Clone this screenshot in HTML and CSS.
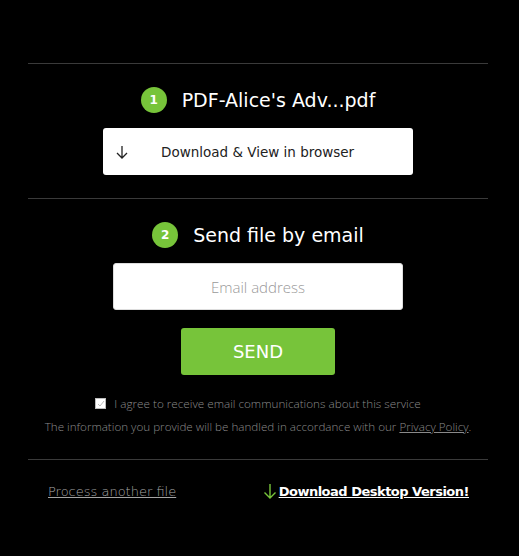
FILE: index.html
```html
<!DOCTYPE html>
<html lang="en">

<head>
    <meta charset="UTF-8">
    <meta name="viewport" content="width=device-width, initial-scale=1.0">
    <title>Send file</title>
    <link rel="stylesheet" href="styles.css">
</head>

<body>
    <div class="panel">
        <div class="step">
            <h2 class="step-title"><span class="badge">1</span>PDF-Alice's Adv...pdf</h2>
            <button class="view-btn">
                <svg class="arrow" width="12" height="14" viewBox="0 0 12 14">
                    <path d="M6 1v12M1 8l5 5 5-5" fill="none" stroke="#222" stroke-width="1.3"/>
                </svg>
                <span>Download &amp; View in browser</span>
            </button>
        </div>

        <div class="step">
            <h2 class="step-title"><span class="badge">2</span>Send file by email</h2>
            <input class="email" type="text" placeholder="Email address">
            <button class="send-btn">SEND</button>
            <label class="agree">
                <span class="check">
                    <svg width="9" height="9" viewBox="0 0 9 9">
                        <path d="M2 5l2 2 4-5" fill="none" stroke="#bbb" stroke-width="1"/>
                    </svg>
                </span>I agree to receive email communications about this service</label>
            <p class="info">The information you provide will be handled in accordance with our <a href="#">Privacy Policy</a>.</p>
        </div>

        <div class="footer">
            <a class="another" href="#">Process another file</a>
            <a class="desktop" href="#">
                <svg width="14" height="16" viewBox="0 0 14 16">
                    <path d="M7 1v14M1.5 9.5L7 15l5.5-5.5" fill="none" stroke="#77c43a" stroke-width="1.4"/>
                </svg>
                <span>Download Desktop Version!</span>
            </a>
        </div>
    </div>
</body>

</html>
```

FILE: styles.css
```css
*,
*::before,
*::after {
    box-sizing: border-box;
}

body {
    margin: 0;
    background: #000;
    font-family: "DejaVu Sans", sans-serif;
    color: #fff;
}

.panel {
    width: 460px;
    margin: 0 0 0 28px;
    padding-top: 63px;
}

.step {
    border-top: 1px solid #3a3a3a;
    display: flex;
    flex-direction: column;
    align-items: center;
}

.step-title {
    display: flex;
    align-items: center;
    margin: 23px 0 15px;
    font-size: 19px;
    font-weight: normal;
    height: 26px;
}

.badge {
    width: 26px;
    height: 26px;
    border-radius: 50%;
    background: #77c43a;
    color: #fff;
    font-size: 12px;
    font-weight: bold;
    display: flex;
    align-items: center;
    justify-content: center;
    margin-right: 15px;
}

.view-btn {
    width: 310px;
    height: 47px;
    margin-bottom: 23px;
    background: #fff;
    border: none;
    border-radius: 3px;
    display: flex;
    align-items: center;
    padding: 0 0 0 13px;
    font-family: "DejaVu Sans", sans-serif;
    font-size: 13.5px;
    color: #222;
    cursor: pointer;
}

.view-btn .arrow {
    margin-right: 33px;
}

.email {
    width: 290px;
    height: 47px;
    border: 1px solid #ddd;
    border-radius: 3px;
    text-align: center;
    font-family: "Open Sans", sans-serif;
    font-weight: 300;
    font-size: 15px;
    outline: none;
}

.email::placeholder {
    color: #999;
}

.send-btn {
    margin-top: 18px;
    width: 154px;
    height: 47px;
    border: none;
    border-radius: 3px;
    background: #77c43a;
    color: #fff;
    font-family: "DejaVu Sans", sans-serif;
    font-size: 18px;
    cursor: pointer;
}

.agree {
    margin-top: 20px;
    display: flex;
    align-items: center;
    font-family: "Open Sans", sans-serif;
    font-weight: 300;
    font-size: 11.7px;
    color: #8a8a8a;
}

.check {
    width: 11px;
    height: 11px;
    background: #fff;
    border: 1px solid #bbb;
    margin-right: 8px;
    display: flex;
    align-items: center;
    justify-content: center;
}

.info {
    margin: 8px 0 25px;
    font-family: "Open Sans", sans-serif;
    font-weight: 300;
    font-size: 11.65px;
    color: #8a8a8a;
}

.info a {
    color: #8a8a8a;
}

.footer {
    border-top: 1px solid #3a3a3a;
    display: flex;
    justify-content: space-between;
    align-items: center;
    padding: 23px 19px 0 20px;
}

.another {
    color: #a5a5a5;
    font-size: 13px;
    font-weight: 300;
}

.desktop {
    display: flex;
    align-items: center;
    color: #fff;
    font-size: 13px;
    font-weight: bold;
    letter-spacing: -0.5px;
}

.desktop svg {
    margin-right: 2px;
}
```
